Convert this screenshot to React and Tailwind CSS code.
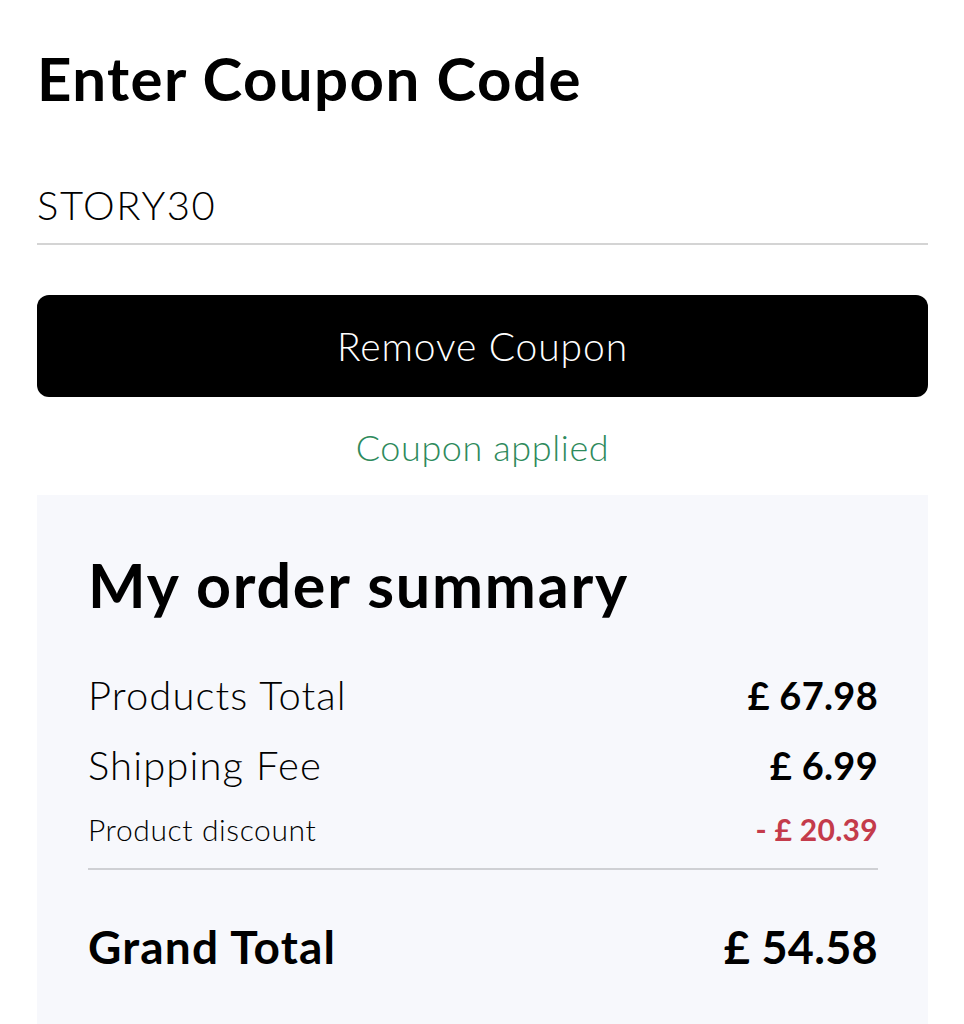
import React, { useState } from 'react';

const SummaryRow = ({ label, value, labelClass, valueClass }) => (
  <div className="flex justify-between items-baseline">
    <span className={labelClass}>{label}</span>
    <span className={valueClass}>{value}</span>
  </div>
);

const App = () => {
  const [code, setCode] = useState('STORY30');

  return (
    <div className="min-h-screen bg-white pl-[37px] pr-[36px] pt-[38px] text-black" style={{ fontFamily: 'Lato, "Noto Sans", sans-serif' }}>
      <h1 className="text-[60px] font-bold leading-[80px] tracking-[1.4px]">Enter Coupon Code</h1>

      {/* Coupon input */}
      <div className="mt-[57px] border-b-2 border-[#d4d4d4]">
        <input
          value={code}
          onChange={(e) => setCode(e.target.value)}
          className="w-full bg-transparent text-[40px] font-light leading-[60px] pb-[8px] outline-none tracking-[1.6px]"
        />
      </div>

      <button className="mt-[50px] w-full h-[102px] rounded-[12px] bg-black text-white text-[39px] font-light tracking-[0.9px]">
        Remove Coupon
      </button>

      <p className="mt-[28px] text-center text-[36px] font-light text-[#2e8a5c] leading-[44px] tracking-[0.6px]">Coupon applied</p>

      {/* Order summary */}
      <div className="mt-[26px] bg-[#f7f8fc] pl-[51px] pr-[50px] pt-[50px] pb-[60px]">
        <h2 className="text-[61px] font-bold leading-[80px] tracking-[1.8px]">My order summary</h2>

        <div className="mt-[39px] flex flex-col gap-[8px]">
          <SummaryRow
            label="Products Total"
            value="£ 67.98"
            labelClass="text-[40px] font-light leading-[62px] tracking-[1.1px]"
            valueClass="text-[38px] font-bold tracking-[0.3px]"
          />
          <SummaryRow
            label="Shipping Fee"
            value="£ 6.99"
            labelClass="text-[40px] font-light leading-[62px] tracking-[1.1px]"
            valueClass="text-[38px] font-bold tracking-[0.3px]"
          />
          <SummaryRow
            label="Product discount"
            value="- £ 20.39"
            labelClass="text-[30px] font-light leading-[50px] tracking-[0.6px]"
            valueClass="text-[30px] font-bold text-[#c43b4b] tracking-[0.3px]"
          />
        </div>

        <div className="mt-[14px] border-t-2 border-[#cfd0d4]" />

        <div className="mt-[44px]">
          <SummaryRow
            label="Grand Total"
            value="£ 54.58"
            labelClass="text-[46px] font-bold leading-[60px] tracking-[1.2px]"
            valueClass="text-[45px] font-bold tracking-[0.3px]"
          />
        </div>
      </div>
    </div>
  );
};

export default App;
